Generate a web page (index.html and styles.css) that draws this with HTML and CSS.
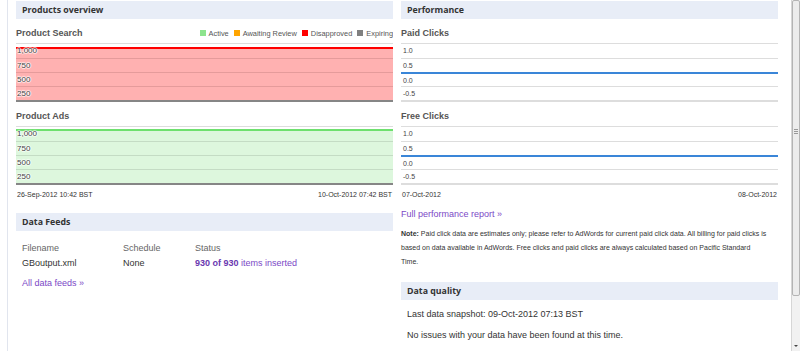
FILE: index.html
```html
<!DOCTYPE html>
<html lang="en">
<head>
    <meta charset="UTF-8">
    <title>Merchant Center - Dashboard</title>
    <link rel="stylesheet" href="styles.css">
</head>
<body>
<div class="screen">
    <div class="page">
        <div class="col">
            <section class="panel">
                <h2 class="panel-head">Products overview</h2>
                <div class="chart-title">
                    <h3>Product Search</h3>
                    <ul class="legend">
                        <li><span class="sw sw-green"></span>Active</li>
                        <li><span class="sw sw-orange"></span>Awaiting Review</li>
                        <li><span class="sw sw-red"></span>Disapproved</li>
                        <li><span class="sw sw-gray"></span>Expiring</li>
                    </ul>
                </div>
                <div class="chart chart-red">
                    <div class="row">1,000</div>
                    <div class="row">750</div>
                    <div class="row">500</div>
                    <div class="row">250</div>
                </div>
                <div class="chart-title">
                    <h3>Product Ads</h3>
                </div>
                <div class="chart chart-green">
                    <div class="row">1,000</div>
                    <div class="row">750</div>
                    <div class="row">500</div>
                    <div class="row">250</div>
                </div>
                <div class="dates">
                    <span>26-Sep-2012 10:42 BST</span>
                    <span>10-Oct-2012 07:42 BST</span>
                </div>
            </section>

            <section class="panel feeds">
                <h2 class="panel-head">Data Feeds</h2>
                <table class="feed-table">
                    <tr>
                        <th class="c-file">Filename</th>
                        <th class="c-sched">Schedule</th>
                        <th>Status</th>
                    </tr>
                    <tr>
                        <td>GBoutput.xml</td>
                        <td>None</td>
                        <td><a href="#"><b>930 of 930</b> items inserted</a></td>
                    </tr>
                </table>
                <a class="more" href="#">All data feeds &raquo;</a>
            </section>
        </div>

        <div class="col">
            <section class="panel">
                <h2 class="panel-head">Performance</h2>
                <div class="chart-title">
                    <h3>Paid Clicks</h3>
                </div>
                <div class="chart chart-line">
                    <div class="row">1.0</div>
                    <div class="row">0.5</div>
                    <div class="row zero">0.0</div>
                    <div class="row">-0.5</div>
                </div>
                <div class="chart-title">
                    <h3>Free Clicks</h3>
                </div>
                <div class="chart chart-line">
                    <div class="row">1.0</div>
                    <div class="row">0.5</div>
                    <div class="row zero">0.0</div>
                    <div class="row">-0.5</div>
                </div>
                <div class="dates">
                    <span>07-Oct-2012</span>
                    <span>08-Oct-2012</span>
                </div>
                <a class="report" href="#">Full performance report &raquo;</a>
                <p class="note"><b>Note:</b> Paid click data are estimates only; please refer to AdWords for current paid click data. All billing for paid clicks is based on data available in AdWords. Free clicks and paid clicks are always calculated based on Pacific Standard Time.</p>
            </section>

            <section class="panel quality">
                <h2 class="panel-head">Data quality</h2>
                <p class="snapshot">Last data snapshot: 09-Oct-2012 07:13 BST</p>
                <p class="snapshot">No issues with your data have been found at this time.</p>
            </section>
        </div>
    </div>

    <div class="scrollbar">
        <div class="thumb"><span class="grip"></span></div>
        <div class="arrow"></div>
    </div>
</div>
</body>
</html>
```

FILE: styles.css
```css
html, body {
    margin: 0;
    height: 351px;
    overflow: hidden;
}
body {
    font-family: "Liberation Sans", Arial, sans-serif;
    color: #333;
    background-color: #fff;
}
.screen {
    display: flex;
    height: 351px;
}
.page {
    flex: 1;
    margin-left: 7px;
    border-left: 1px solid #e1e5ee;
    padding-left: 8px;
    display: grid;
    grid-template-columns: 377px 377px;
    column-gap: 8px;
    align-content: start;
}

/* panels */
.panel-head {
    margin: 1px 0 0;
    height: 18px;
    line-height: 18px;
    padding-left: 6px;
    background-color: #e8edf7;
    font-family: "Open Sans", sans-serif;
    font-size: 8.8px;
    font-weight: bold;
    color: #333;
}
.chart-title {
    display: flex;
    align-items: center;
    height: 24px;
    padding-top: 4px;
    box-sizing: border-box;
}
.chart-title h3 {
    margin: 0;
    font-size: 9px;
    font-weight: bold;
    color: #555;
    white-space: nowrap;
}
.legend {
    display: flex;
    margin: 0 0 0 auto;
    padding: 0;
    list-style: none;
    font-size: 7.4px;
    color: #555;
    white-space: nowrap;
    overflow: hidden;
}
.legend li {
    display: flex;
    align-items: center;
    margin-left: 5px;
}
.sw {
    width: 6px;
    height: 6px;
    margin-right: 3px;
}
.sw-green { background-color: #8de48d; }
.sw-orange { background-color: #ffa500; }
.sw-red { background-color: #ff0000; }
.sw-gray { background-color: #808080; }

/* charts */
.chart {
    border-top: 1px solid #ddd;
    border-bottom: 2px solid #868686;
}
.chart .row {
    height: 14px;
    box-sizing: border-box;
    padding-left: 1px;
    font-size: 8px;
    line-height: 13px;
    color: #444;
    text-shadow: 1px 0 1px #fff, -1px 0 1px #fff, 0 1px 1px #fff, 0 -1px 1px #fff;
}
.chart-red {
    background: linear-gradient(#fff 0 3px, #ff0000 3px 5px, #ffb1b1 5px);
}
.chart-red .row + .row {
    border-top: 1px solid #e59b9b;
}
.chart-green {
    background: linear-gradient(#fff 0 2px, #6ee06e 2px 4px, #ddf7dd 4px);
}
.chart-green .row + .row {
    border-top: 1px solid #c4dcc4;
}
.chart-line {
    border-bottom-color: #ddd;
}
.chart-line .row {
    font-size: 7px;
    padding-left: 2px;
    text-shadow: none;
}
.chart-line .row + .row {
    border-top: 1px solid #ddd;
}
.chart-line .row.zero {
    border-top: 2px solid #3a86d8;
}
.dates {
    display: flex;
    justify-content: space-between;
    align-items: center;
    height: 19px;
    font-size: 7px;
    color: #333;
    padding: 0 1px;
}

a {
    color: #7b48c6;
    text-decoration: none;
}

/* data feeds */
.feeds {
    margin-top: 9px;
}
.feed-table {
    border-collapse: collapse;
    margin: 9px 0 0 6px;
    font-size: 9px;
}
.feed-table th,
.feed-table td {
    padding: 0;
    height: 15px;
    text-align: left;
    white-space: nowrap;
}
.feed-table th {
    font-weight: normal;
    color: #666;
}
.feed-table td {
    color: #333;
}
.feed-table b {
    color: #6a38b0;
}
.c-file { width: 101px; }
.c-sched { width: 72px; }
.more {
    display: block;
    margin: 6px 0 0 6px;
    font-size: 9px;
    line-height: 15px;
}

/* performance */
.report {
    display: block;
    margin-top: 3px;
    font-size: 9px;
    line-height: 15px;
}
.note {
    margin: 5px 0 0;
    max-width: 366px;
    font-size: 7px;
    line-height: 14px;
    color: #333;
}
.quality {
    margin-top: 13px;
}
.snapshot {
    margin: 7px 0 0 6px;
    font-size: 9px;
    line-height: 15px;
    color: #333;
}
.snapshot + .snapshot {
    margin-top: 6px;
}

/* window scrollbar */
.scrollbar {
    width: 8px;
    margin-left: auto;
    display: flex;
    flex-direction: column;
    background-color: #f1f1f1;
    border-left: 1px solid #d6d6d6;
}
.thumb {
    height: 294px;
    background-color: #ececec;
    border: 1px solid #b4b4b4;
    border-radius: 2px;
    display: flex;
    justify-content: center;
}
.grip {
    width: 4px;
    height: 5px;
    margin-top: 128px;
    background: repeating-linear-gradient(#999 0 1px, transparent 1px 2px);
}
.arrow {
    margin: auto auto 4px;
    width: 0;
    height: 0;
    border-left: 2px solid transparent;
    border-right: 2px solid transparent;
    border-top: 2px solid #444;
}
```
